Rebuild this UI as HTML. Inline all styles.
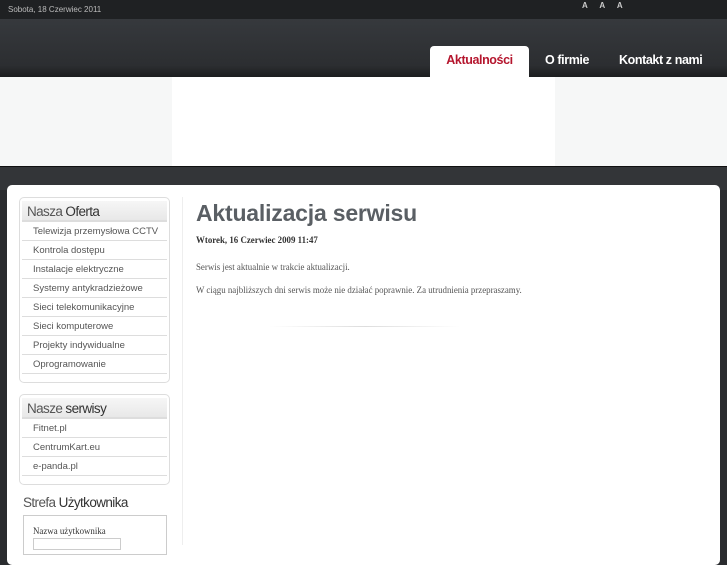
<!DOCTYPE html>
<html><head><meta charset="utf-8"><style>
*{margin:0;padding:0;box-sizing:border-box}
body{width:727px;height:545px;overflow:hidden;background:#2a2c2f;font-family:"Liberation Sans",sans-serif;position:relative}
.top{position:absolute;left:0;top:0;width:727px;height:19px;background:#1f2123;color:#bbb;font-size:8px;line-height:19px;padding-left:8px}
.aa{position:absolute;left:582px;top:1px;color:#ccc;font-size:8px;font-weight:bold;letter-spacing:5px}
.hdr{position:absolute;left:0;top:19px;width:727px;height:58px;background:linear-gradient(#36393d,#2c2e31 80%,#1c1d1f)}
.nav{position:absolute;top:46px;height:31px;font-size:12.5px;font-weight:bold;color:#fff;line-height:29px;letter-spacing:-0.4px}
.tab{left:430px;width:99px;background:#fff;border-radius:4px 4px 0 0;color:#b5162e;text-align:center}
.ban{position:absolute;left:0;top:77px;width:727px;height:89px;background:#f6f7f7}
.ban .w{position:absolute;left:172px;width:383px;height:89px;background:#fff}
.strip{position:absolute;left:0;top:166px;width:727px;height:24px;background:#333538;border-top:1px solid #111}
.panel{position:absolute;left:7px;top:185px;width:713px;height:380px;background:#fff;border-radius:5px}
.vl{position:absolute;left:182px;top:197px;width:1px;height:348px;background:#eee}
.box{position:absolute;left:19px;width:151px;border:1px solid #ddd;border-radius:5px;padding:3px 2px}
.bh{background:linear-gradient(#f6f6f6,#e8e8e8);height:21px;font-size:13.5px;color:#555;padding-left:5px;line-height:21px;letter-spacing:-.6px;border-bottom:2px solid #ddd}
.bh b{color:#333;font-weight:normal}
.it{height:19px;border-bottom:1px solid #ddd;font-size:9.5px;color:#555;line-height:20px;padding-left:11px}
h1{position:absolute;left:196px;top:200px;font-size:23px;color:#5a5f64;letter-spacing:-0.2px}
.s{font-family:"Liberation Serif",serif;position:absolute;left:196px;font-size:8.9px;color:#555}
</style></head><body>
<div class="top">Sobota, 18 Czerwiec 2011</div>
<div class="aa">A A A</div>
<div class="hdr"></div>
<div class="nav tab">Aktualności</div>
<div class="nav" style="left:545px">O firmie</div>
<div class="nav" style="left:619px">Kontakt z nami</div>
<div class="ban"><div class="w"></div></div>
<div class="strip"></div>
<div class="panel"></div>
<div class="vl"></div>
<div class="box" style="top:197px;height:186px"><div class="bh">Nasza <b>Oferta</b></div>
<div class="it">Telewizja przemysłowa CCTV</div><div class="it">Kontrola dostępu</div><div class="it">Instalacje elektryczne</div><div class="it">Systemy antykradzieżowe</div><div class="it">Sieci telekomunikacyjne</div><div class="it">Sieci komputerowe</div><div class="it">Projekty indywidualne</div><div class="it">Oprogramowanie</div></div>
<div class="box" style="top:394px;height:91px"><div class="bh">Nasze <b>serwisy</b></div>
<div class="it">Fitnet.pl</div><div class="it">CentrumKart.eu</div><div class="it">e-panda.pl</div></div>
<div style="position:absolute;left:23px;top:495px;font-size:13.5px;color:#555;letter-spacing:-.6px">Strefa <span style="color:#333">Użytkownika</span></div>
<div style="position:absolute;left:23px;top:515px;width:144px;height:40px;border:1px solid #ccc"></div>
<div class="s" style="left:33px;top:526px;color:#333">Nazwa użytkownika</div>
<div style="position:absolute;left:33px;top:538px;width:88px;height:12px;border:1px solid #ccc"></div>
<h1>Aktualizacja serwisu</h1>
<div class="s" style="top:235px;font-weight:bold;color:#333">Wtorek, 16 Czerwiec 2009 11:47</div>
<div class="s" style="top:262px">Serwis jest aktualnie w trakcie aktualizacji.</div>
<div class="s" style="top:285px">W ciągu najbliższych dni serwis może nie działać poprawnie. Za utrudnienia przepraszamy.</div>
<div style="position:absolute;left:270px;top:326px;width:190px;height:1px;background:linear-gradient(90deg,#fff,#ddd,#fff)"></div>
</body></html>
